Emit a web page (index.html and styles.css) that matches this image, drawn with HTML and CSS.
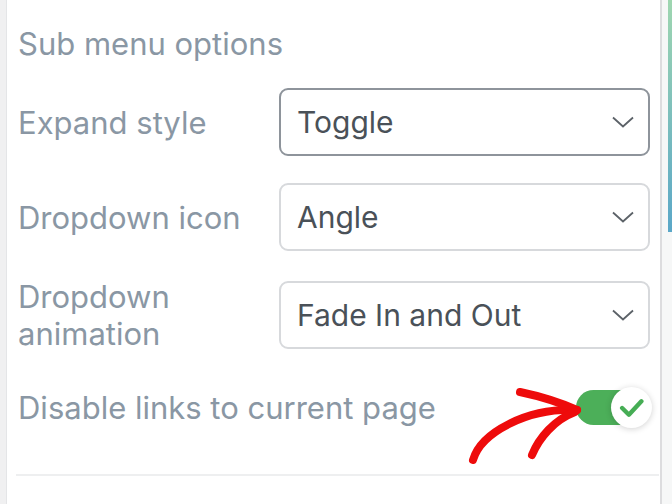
FILE: index.html
```html
<!DOCTYPE html>
<html lang="en">
<head>
  <meta charset="UTF-8">
  <title>Sub menu options</title>
  <meta name="viewport" content="width=device-width, initial-scale=1.0">
  <link rel="stylesheet" href="styles.css">
</head>
<body>
  <div class="edge-left"></div>

  <div class="panel">
    <h2 class="panel-title">Sub menu options</h2>

    <div class="field">
      <label class="field-label">Expand style</label>
      <div class="select is-focused">
        <span>Toggle</span>
        <svg class="chevron" viewBox="0 0 22 12"><path d="M1 1.5 L11 10.5 L21 1.5"/></svg>
      </div>
    </div>

    <div class="field">
      <label class="field-label">Dropdown icon</label>
      <div class="select">
        <span>Angle</span>
        <svg class="chevron" viewBox="0 0 22 12"><path d="M1 1.5 L11 10.5 L21 1.5"/></svg>
      </div>
    </div>

    <div class="field field-tall">
      <label class="field-label">Dropdown<br>animation</label>
      <div class="select">
        <span>Fade In and Out</span>
        <svg class="chevron" viewBox="0 0 22 12"><path d="M1 1.5 L11 10.5 L21 1.5"/></svg>
      </div>
    </div>

    <div class="field field-switch">
      <label class="field-label wide">Disable links to current page</label>
      <div class="switch">
        <span class="knob">
          <svg viewBox="0 0 24 24"><path d="M3 12.5 L9.5 19 L21.5 6"/></svg>
        </span>
      </div>
    </div>

    <hr class="divider">

    <svg class="arrow" viewBox="0 0 130 90">
      <path d="M14 80 C18 66 30 54 50 44 C72 33 95 29 118 30"/>
      <path d="M61 12 C80 16 100 22 118 30"/>
      <path d="M73 75 C80 58 95 40 116 32"/>
    </svg>
  </div>

  <div class="edge-right"><span class="strip"></span></div>
</body>
</html>
```

FILE: styles.css
```css
* {
  box-sizing: border-box;
}

body {
  margin: 0;
  height: 504px;
  overflow: hidden;
  display: flex;
  background: #fff;
  font-family: 'Inter', 'Open Sans', sans-serif;
}

.edge-left {
  width: 7px;
  background: #f0f0f1;
  border-right: 1px solid #e4e5e7;
}

.edge-right {
  width: 12px;
  display: flex;
  justify-content: flex-end;
  border-left: 2px solid #dcdcde;
  background: #f6f7f7;
}

.edge-right .strip {
  width: 4px;
  height: 232px;
  background: linear-gradient(#9fd6b0, #5aa7c8);
}

.panel {
  flex: 1;
  position: relative;
  padding: 26px 3px 0 11px;
}

.panel-title {
  margin: 0 0 27px;
  font-size: 31px;
  line-height: 35px;
  font-weight: 400;
  color: #8a97a4;
}

.field {
  display: flex;
  align-items: center;
  margin-bottom: 27px;
}

.field-label {
  width: 261px;
  font-size: 31px;
  line-height: 37px;
  color: #8a97a4;
}

.field-label.wide {
  width: auto;
  flex: 1;
}

.field-tall {
  height: 74px;
}

.select {
  width: 371px;
  height: 68px;
  display: flex;
  align-items: center;
  justify-content: space-between;
  padding: 0 14px 0 16px;
  border: 2px solid #d7d9dc;
  border-radius: 9px;
  font-size: 30px;
  color: #4a5158;
}

.select.is-focused {
  border-color: #8e949b;
}

.chevron {
  width: 22px;
  height: 12px;
  fill: none;
  stroke: #5c6268;
  stroke-width: 1.8;
}

.field-switch {
  margin-top: 37px;
  margin-bottom: 0;
}

.switch {
  position: relative;
  width: 73px;
  height: 35px;
  margin-right: 8px;
  background: #4caf59;
  border-radius: 18px;
}

.knob {
  position: absolute;
  right: -3px;
  top: -3px;
  width: 41px;
  height: 41px;
  border-radius: 50%;
  background: #fff;
  box-shadow: 0 1px 6px rgba(0,0,0,0.18);
  display: flex;
  align-items: center;
  justify-content: center;
}

.knob svg {
  width: 25px;
  height: 25px;
  fill: none;
  stroke: #46ad55;
  stroke-width: 4.2;
  stroke-linecap: round;
  stroke-linejoin: round;
}

.divider {
  margin: 48px -2px 0 -2px;
  border: 0;
  border-top: 2px solid #eeeff0;
}

.arrow {
  position: absolute;
  left: 452px;
  top: 380px;
  width: 130px;
  height: 90px;
  fill: none;
  stroke: #ee0b0b;
  stroke-width: 8;
  stroke-linecap: round;
}
```
